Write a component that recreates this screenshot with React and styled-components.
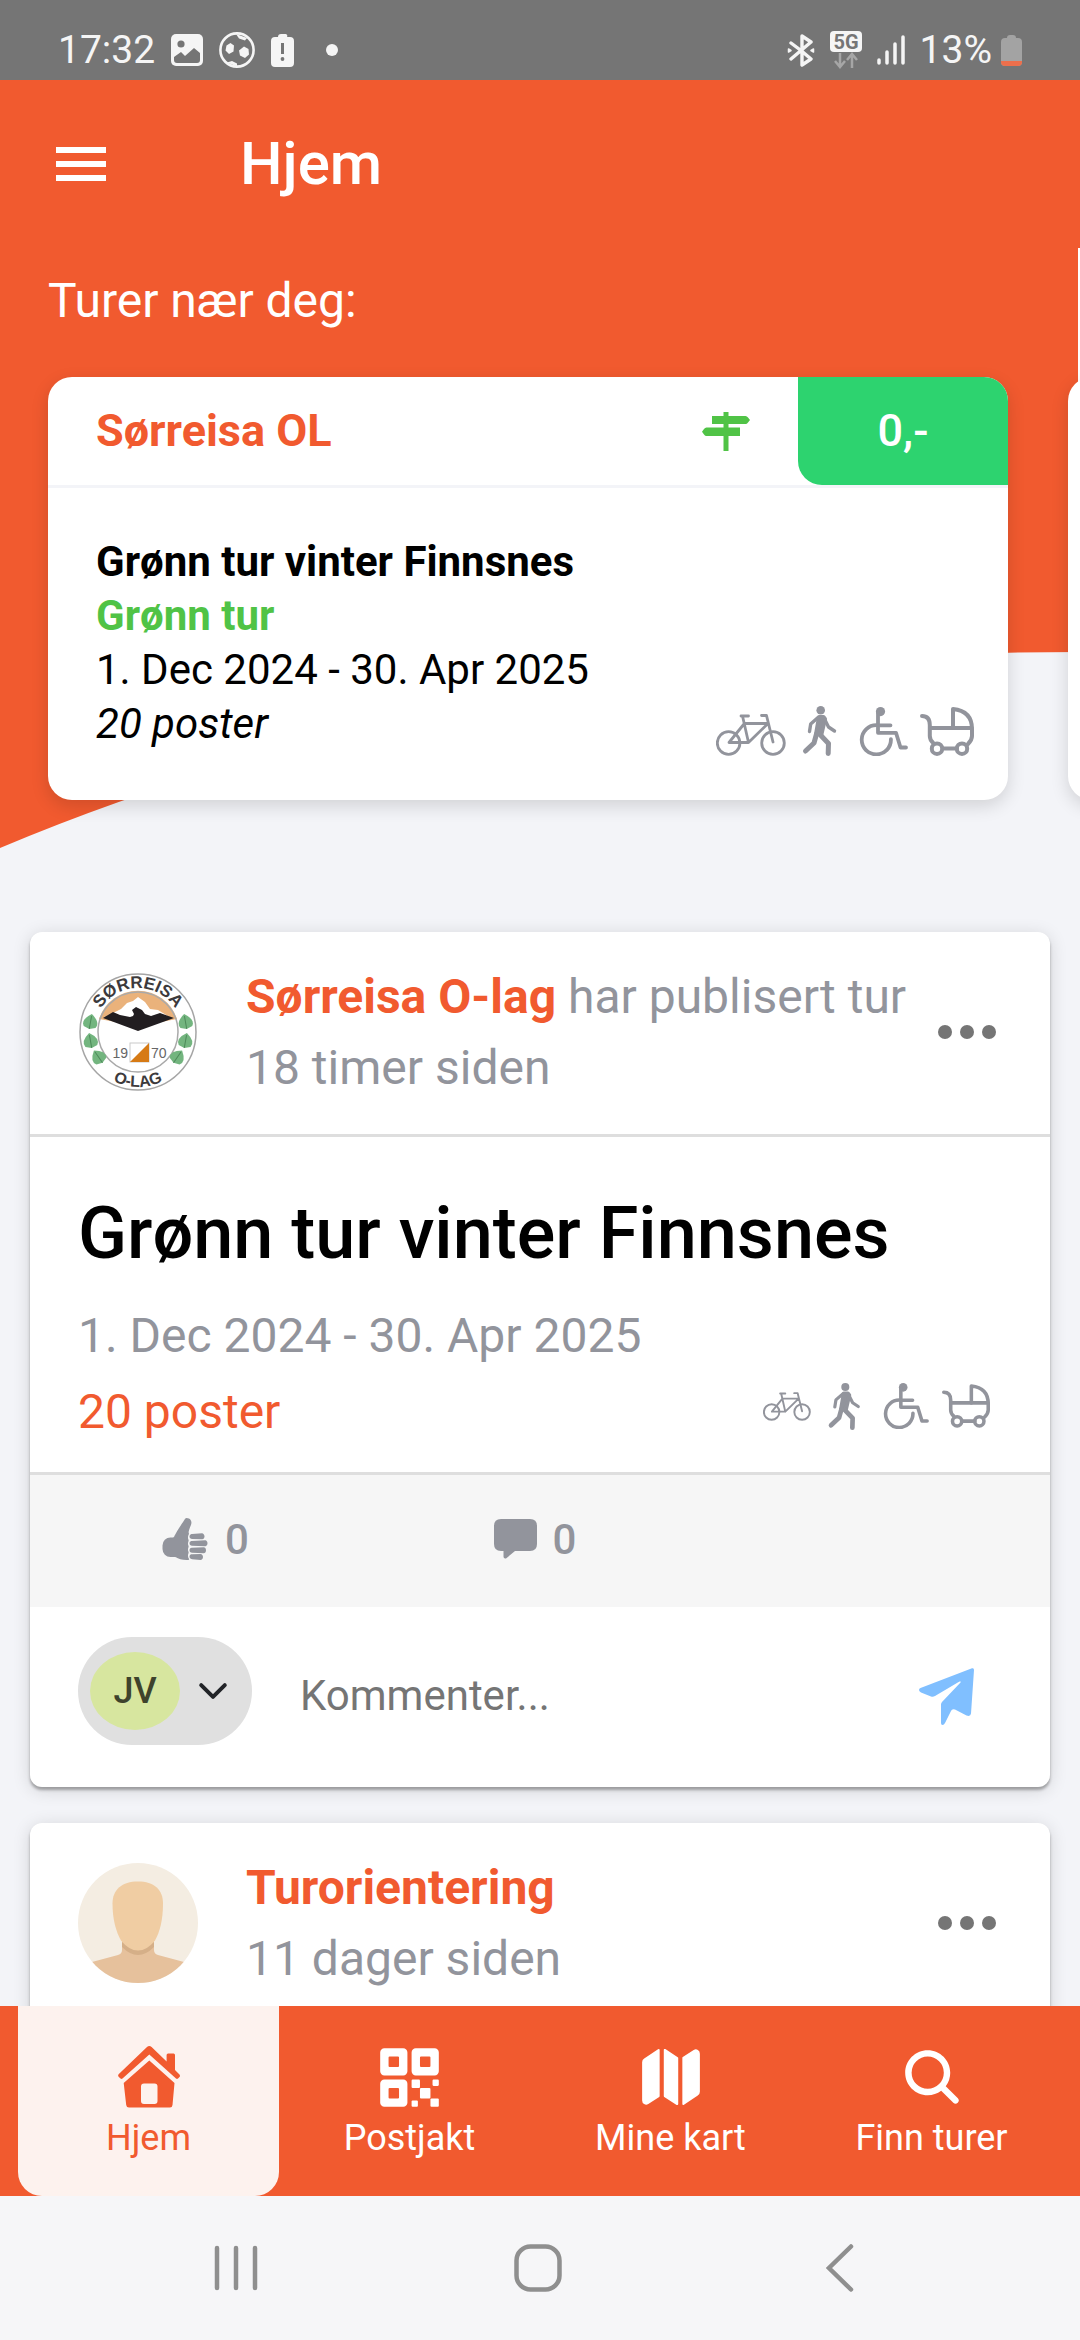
import styled, { createGlobalStyle } from "styled-components";
import {
	IoChevronDown,
	IoMap,
	IoQrCode,
	IoSearch,
	IoThumbsUp,
} from "react-icons/io5";

const GlobalStyle = createGlobalStyle`
	* {
		box-sizing: border-box;
	}

	body {
		margin: 0;
		background: #f3f4f8;
		font-family: Roboto, "Noto Sans", sans-serif;
		color: #000;
	}

	h1, h2, h3, p {
		margin: 0;
	}

	button, input {
		font: inherit;
		color: inherit;
		border: 0;
		padding: 0;
		background: none;
	}

	a {
		text-decoration: none;
		color: inherit;
	}

	svg {
		display: block;
		flex: none;
	}
`;

const Screen = styled.div`
	display: flex;
	flex-direction: column;
	height: 100vh;
	overflow: hidden;
`;

/* Status bar */

const StatusBar = styled.div`
	display: flex;
	justify-content: space-between;
	align-items: center;
	height: 80px;
	padding: 20px 58px 0;
	background: #757575;
	color: #f5f5f5;
	font-size: 39px;
	line-height: 60px;
`;

const StatusGroup = styled.div`
	display: flex;
	align-items: center;
	gap: ${(props) => props.$gap}px;
`;

const StatusDot = styled.span`
	width: 12px;
	height: 12px;
	margin-left: 16px;
	border-radius: 50%;
	background: #f5f5f5;
`;

/* Page */

const Page = styled.main`
	position: relative;
	flex: 1;
	min-height: 0;
	overflow: hidden;
`;

const HeroShape = styled.svg`
	position: absolute;
	top: 0;
	left: 0;
	width: 100%;
	height: 768px;
	z-index: -1;
`;

const Toolbar = styled.header`
	display: flex;
	align-items: center;
	gap: 134px;
	height: 168px;
	padding: 0 56px;
	color: #fff;
`;

const PageTitle = styled.h1`
	font-size: 60px;
	font-weight: 500;
	line-height: 72px;
`;

const SectionTitle = styled.h2`
	padding: 24px 48px 0;
	color: #fff;
	font-size: 48px;
	font-weight: 400;
	line-height: 57px;
`;

/* Nearby trips */

const Carousel = styled.div`
	display: flex;
	gap: 60px;
	padding: 48px;
	overflow: hidden;
`;

const TripCard = styled.article`
	flex: 0 0 calc(100% - 24px);
	min-height: 423px;
	border-radius: 24px;
	background: #fff;
	box-shadow: 0 6px 18px rgba(0, 0, 0, 0.14);
	overflow: hidden;
`;

const TripHead = styled.div`
	display: flex;
	align-items: stretch;
	height: 111px;
	border-bottom: 3px solid #f3f4f8;
`;

const TripClub = styled.h3`
	flex: 1;
	padding-left: 48px;
	color: #f15a2f;
	font-size: 45px;
	font-weight: 700;
	line-height: 108px;
`;

const TripType = styled.span`
	display: flex;
	align-items: center;
	padding-right: 48px;
`;

const Price = styled.span`
	width: 210px;
	border-bottom-left-radius: 24px;
	background: #2dd36f;
	color: #fff;
	font-size: 45px;
	font-weight: 500;
	line-height: 108px;
	text-align: center;
`;

const TripBody = styled.div`
	display: flex;
	justify-content: space-between;
	align-items: flex-end;
	padding: 47px 34px 44px 48px;
`;

const TripText = styled.div`
	padding-bottom: 5px;
	font-size: 42px;
	line-height: 54px;
`;

const TripName = styled.p`
	font-weight: 700;
	color: ${(props) => (props.$green ? "#50c346" : "#000")};
`;

const TripPosts = styled.p`
	font-style: italic;
`;

const ActivityList = styled.div`
	display: flex;
	align-items: ${(props) => (props.$small ? "center" : "flex-end")};
	gap: ${(props) => (props.$small ? 13 : 12)}px;
	color: #92949c;
`;

/* Feed */

const Feed = styled.section`
	display: flex;
	flex-direction: column;
	gap: 36px;
	padding: 84px 30px 0;
`;

const PostCard = styled.article`
	border-radius: 12px;
	background: #fff;
	box-shadow: 0 3px 3px rgba(0, 0, 0, 0.3), 0 3px 18px rgba(0, 0, 0, 0.14);
	overflow: hidden;
`;

const PostHead = styled.div`
	display: flex;
	align-items: center;
	padding: 29px 48px 31px;
	border-bottom: 3px solid #dedede;
`;

const PostMeta = styled.div`
	flex: 1;
	padding-left: 48px;
	color: #92949c;
	font-size: 48px;
	line-height: 71px;
	white-space: nowrap;
`;

const Author = styled.a`
	color: #f15a2f;
	font-weight: 700;
`;

const MoreButton = styled.button`
	display: flex;
	gap: 8px;
	padding-right: 6px;
`;

const MoreDot = styled.span`
	width: 14px;
	height: 14px;
	border-radius: 50%;
	background: #757575;
`;

const PostBody = styled.div`
	padding: 55px 48px 22px;
	border-bottom: 3px solid #dedede;
	color: #92949c;
	font-size: 48px;
	line-height: 76px;
`;

const PostTitle = styled.h2`
	margin-bottom: 22px;
	color: #000;
	font-size: 72px;
	font-weight: 500;
	line-height: 84px;
`;

const PostRow = styled.div`
	display: flex;
	justify-content: space-between;
	align-items: center;
	height: 76px;
`;

const PostIcons = styled.div`
	padding: 0 12px 12px 0;
`;

const PostLink = styled.a`
	color: #f15a2f;
`;

const Reactions = styled.div`
	display: grid;
	grid-template-columns: repeat(3, 1fr);
	height: 132px;
	padding: 0 20px 4px 10px;
	background: #f6f6f6;
	color: #92949c;
	font-size: 42px;
	font-weight: 500;
`;

const Reaction = styled.button`
	display: flex;
	justify-content: center;
	align-items: center;
	gap: 16px;
`;

const CommentForm = styled.form`
	display: flex;
	align-items: center;
	gap: 48px;
	height: 180px;
	padding: 0 76px 0 48px;
`;

const AccountButton = styled.button`
	display: flex;
	align-items: center;
	gap: 12px;
	width: 174px;
	height: 108px;
	margin-bottom: 12px;
	padding-left: 12px;
	border-radius: 54px;
	background: #e0e0e0;
	color: #222428;
`;

const Initials = styled.span`
	width: 90px;
	height: 78px;
	border-radius: 50%;
	background: #d7e69f;
	color: #3e432c;
	font-size: 36px;
	font-weight: 500;
	line-height: 78px;
	text-align: center;
`;

const CommentInput = styled.input`
	flex: 1;
	min-width: 0;
	height: 90px;
	margin-bottom: 4px;
	font-size: 42px;
	outline: none;

	&::placeholder {
		color: #757575;
		opacity: 1;
	}
`;

/* Bottom bars */

const TabBar = styled.nav`
	display: grid;
	grid-template-columns: repeat(4, 1fr);
	flex: none;
	height: 190px;
	padding: 0 18px;
	background: #f15a2f;
`;

const Tab = styled.a`
	display: flex;
	flex-direction: column;
	align-items: center;
	gap: 2px;
	padding-top: 36px;
	border-radius: 0 0 24px 24px;
	background: ${(props) => (props.$active ? "#fdf2ee" : "transparent")};
	color: ${(props) => (props.$active ? "#f15a2f" : "#fff")};
	font-size: 36px;
	line-height: 48px;
`;

const TabIcon = styled.span`
	display: flex;
	justify-content: center;
	align-items: center;
	height: 70px;
`;

const SystemBar = styled.div`
	display: flex;
	justify-content: center;
	align-items: center;
	gap: 242px;
	flex: none;
	height: 144px;
	padding-right: 5px;
	background: #f6f6f8;
`;

const SystemButton = styled.button`
	display: flex;
	justify-content: center;
	width: 60px;
`;

/* Icons */

function ImageIcon() {
	return (
		<svg width="32" height="32" viewBox="0 0 32 32">
			<rect width="32" height="32" rx="5" fill="#f5f5f5" />
			<circle cx="10" cy="10" r="3.6" fill="#757575" />
			<path d="M3 23l7-5 4 4 9-8 6 5v7a3 3 0 0 1-3 3H6a3 3 0 0 1-3-3z" fill="#757575" />
		</svg>
	);
}

function BallIcon() {
	return (
		<svg width="36" height="36" viewBox="0 0 36 36">
			<circle cx="18" cy="18" r="16.6" fill="none" stroke="#f5f5f5" strokeWidth="2.6" />
			<g fill="#f5f5f5">
				<path d="M11.500 11l3.500 2.500-.5 6-4.500 2.500-3.500-3.500 1-5z" />
				<path d="M25 14.500l4.500 2.500.5 5.500-4 3.500-5-2.500-1-5z" />
				<path d="M17 2l11 4-2 2.500-6-2z" />
				<path d="M8 30.500l5-1.500 5 2.500v3z" />
			</g>
		</svg>
	);
}

function BatteryAlertIcon() {
	return (
		<svg width="23" height="33" viewBox="0 0 23 33">
			<path d="M7 3a3 3 0 0 1 3-3h4a2 2 0 0 1 2 3h3a4 4 0 0 1 4 4v22a4 4 0 0 1-4 4H4a4 4 0 0 1-4-4V7a4 4 0 0 1 4-4z" fill="#f5f5f5" />
			<path d="M11.500 9v11" stroke="#757575" strokeWidth="3" />
			<circle cx="11.500" cy="25" r="1.900" fill="#757575" />
		</svg>
	);
}

function BluetoothIcon() {
	return (
		<svg width="28" height="33" viewBox="0 0 28 33" fill="none" stroke="#f5f5f5" strokeWidth="3.400" strokeLinejoin="round" strokeLinecap="round">
			<path d="M4 9l10 7.500L24 25l-9 6V2l9 6-10 8.500L4 25" />
			<path d="M26.500 15l-2.500 1.500 2.500 1.500zM1.500 15L4 16.500 1.500 18z" strokeWidth="1.500" fill="#f5f5f5" />
		</svg>
	);
}

function NetworkIcon() {
	return (
		<svg width="32" height="38" viewBox="0 0 32 38">
			<rect width="32" height="21" rx="4" fill="#f5f5f5" />
			<text x="16" y="18" textAnchor="middle" fontSize="20" fontWeight="700" fill="#757575">
				5G
			</text>
			<path d="M10 22v13M5 30l5 6 5-6M22 37V24M17 29l5-6 5 6" fill="none" stroke="#a6a6a6" strokeWidth="2.500" />
		</svg>
	);
}

function SignalIcon() {
	return (
		<svg width="28" height="30" viewBox="0 0 28 30" stroke="#f5f5f5" strokeWidth="3.500" strokeLinecap="round">
			<path d="M2 25v3M10 17v11M18 9v19M26 2v26" />
		</svg>
	);
}

function BatteryIcon() {
	return (
		<svg width="21" height="31" viewBox="0 0 21 31">
			<path d="M6 3a3 3 0 0 1 3-3h3a3 3 0 0 1 3 3h2a4 4 0 0 1 4 4v20a4 4 0 0 1-4 4H4a4 4 0 0 1-4-4V7a4 4 0 0 1 4-4z" fill="#a3a3a3" />
			<path d="M0 26h21v1a4 4 0 0 1-4 4H4a4 4 0 0 1-4-4z" fill="#ec6f4c" />
		</svg>
	);
}

function MenuIcon() {
	return (
		<svg width="50" height="34" viewBox="0 0 50 34" fill="#fff">
			<path d="M0 0h50v6H0zM0 14h50v6H0zM0 28h50v6H0z" />
		</svg>
	);
}

function SignpostIcon() {
	return (
		<svg width="48" height="39" viewBox="0 0 48 39" fill="#50c346">
			<path d="M21.500 0h5v39h-5z" />
			<path d="M10 4h33.500q1.500 0 2.500 1.500L48 8l-2 2.500q-1 1.500-2.500 1.500H10z" />
			<path d="M38 15.500H4.500Q3 15.500 2 17l-2 2.700 2 2.800q1 1.500 2.500 1.500H38z" />
		</svg>
	);
}

function BikeIcon({ width, height }) {
	return (
		<svg width={width} height={height} viewBox="0 0 70 42" fill="none" stroke="currentColor" strokeWidth="2.800" strokeLinecap="round" strokeLinejoin="round">
			<circle cx="12.600" cy="29" r="11.300" />
			<circle cx="57" cy="29" r="11.300" />
			<path d="M25 2h7.500M26.500 2l6 26.500H13L28 10M28.500 9.500H52L32.500 28.500M45.500 1.500h5L57 28" />
		</svg>
	);
}

function WalkIcon({ width, height }) {
	return (
		<svg width={width} height={height} viewBox="-5 0 49 50" fill="none" stroke="currentColor" strokeLinecap="round" strokeLinejoin="round">
			<circle cx="17.700" cy="4.300" r="4.300" fill="currentColor" stroke="none" />
			<path d="M16 11h4.500l1.500 2-3.500 15H13z" fill="currentColor" strokeWidth="4" />
			<path d="M15 11.500L7.700 18 6.500 25.500M22 14l3.500 7 6 4" strokeWidth="3.400" />
			<path d="M16.500 28l9 9.500-.3 10" strokeWidth="5" />
			<path d="M13.500 28L11 37l-8.500 8" strokeWidth="5" />
		</svg>
	);
}

function WheelchairIcon({ width, height }) {
	return (
		<svg width={width} height={height} viewBox="0 0 49 49" fill="none" stroke="currentColor" strokeWidth="3.800" strokeLinecap="round" strokeLinejoin="round">
			<circle cx="21.500" cy="4.600" r="4.600" fill="currentColor" stroke="none" />
			<path d="M19 5v20.800h18l4.500 14.700H47M19 18.300h12.500" />
			<path d="M18 18.200a14.600 14.600 0 1 0 13.900 14" />
		</svg>
	);
}

function StrollerIcon({ width, height }) {
	return (
		<svg width={width} height={height} viewBox="0 0 54 49" fill="none" stroke="currentColor" strokeWidth="4" strokeLinecap="round" strokeLinejoin="round">
			<path d="M2 9q7.800 0 7.800 9v11q0 4 3.500 7M9.800 21h42" />
			<path d="M33 21V2q19 2 19 20v7q0 4-4 8M23 41.500h14" />
			<circle cx="17" cy="41.700" r="5.200" />
			<circle cx="42" cy="41.700" r="5.200" />
		</svg>
	);
}

function CommentIcon() {
	return (
		<svg width="43" height="40" viewBox="0 0 43 40" fill="currentColor">
			<path d="M7 0h29q7 0 7 7v18q0 7-7 7H21l-9 7.500q-2.500.5-2.500-2V32H7q-7 0-7-7V7q0-7 7-7z" />
		</svg>
	);
}

function SendIcon() {
	return (
		<svg width="55" height="58" viewBox="0 0 55 58" fill="#80bfff">
			<path d="M53 .3L1.500 20Q0 20.700 0 22t2 2.500l10 4q2 .8 4-.5L40.500 13.500q2-.5 1 1L23 34q-1 1-1 2.500V55q0 2 1.500 2t2.500-2l6-12q1-2.500 4-1.500l11.500 6q4 1.500 4.500-2L55 2q0-2.300-2-1.700z" />
		</svg>
	);
}

function HomeIcon() {
	return (
		<svg width="62" height="62" viewBox="0 0 62 62" fill="currentColor">
			<path d="M29 1q2.300-2 4.600 0l15 14.500V9q0-1.500 1.500-1.500h5.500Q57 7.500 57 9v15l4.500 4.500q1 1.500 0 2.500l-1.500 1.500q-1 .8-2 0L31.300 8.500 4.500 32.500q-1 .8-2 0L.6 30.700q-1-1.200 0-2.500z" />
			<path
				fillRule="evenodd"
				d="M31.300 14.500L56.500 37l-2 22q-.3 2.500-2.500 2.500H11Q8.500 61.500 8.200 59L5.700 37zM26 37.500q-3 0-3 3V55q0 3 3 3h10.500q3 0 3-3V40.500q0-3-3-3z"
			/>
		</svg>
	);
}

function ClubLogo() {
	return (
		<svg width="120" height="120" viewBox="0 0 120 120" role="img" aria-label="Sørreisa O-lag">
			<defs>
				<path id="logoTop" d="M16 60a44 44 0 0 1 88 0" />
				<path id="logoBottom" d="M5 60a55 55 0 0 0 110 0" />
			</defs>
			<circle cx="60" cy="60" r="58" fill="#fff" stroke="#a5a5a5" strokeWidth="1.500" />
			<path d="M21 47a41 41 0 0 1 78 0L61 54z" fill="#eab27b" />
			<circle cx="60" cy="60" r="40" fill="none" stroke="#a9a9a9" strokeWidth="1.500" />
			<path d="M29 44l14-7 6-6 6-2 5-4 7 5 5 7 8 1 13 8-32 9z" fill="#fff" />
			<path d="M25 46l10-6 7 3 10 2 3-1 1-2-2-4 4-3 6 3 3 4 6 2 9-3 14 5-36 13z" fill="#211d20" />
			{[
				[12.5, 50, 10],
				[12.5, 69, -10],
				[20.5, 85, -35],
				[107.5, 50, -10],
				[107.5, 69, 10],
				[99.5, 85, 35],
			].map(([x, y, angle]) => (
				<g key={`${x}-${y}`} transform={`translate(${x} ${y}) rotate(${angle})`}>
					<path d="M0-8q10 7 6 13l-6 2-6-2q-4-6 6-13z" fill="#73b57f" />
					<path d="M0-6V7" stroke="#4d8a59" strokeWidth="1" />
				</g>
			))}
			<rect x="52" y="71" width="19" height="19" fill="#fff" stroke="#c9c9c9" strokeWidth="1" />
			<path d="M71 71v19H52z" fill="#d67a15" />
			<g fontFamily="Liberation Sans, sans-serif" fill="#3c3a3c">
				<text x="50" y="86" fontSize="14" textAnchor="end" fill="#666">19</text>
				<text x="73" y="86" fontSize="14" fill="#666">70</text>
				<text fontSize="17" fontWeight="700" textAnchor="middle">
					<textPath href="#logoTop" startOffset="50%">SØRREISA</textPath>
				</text>
				<text fontSize="16" fontWeight="700" textAnchor="middle">
					<textPath href="#logoBottom" startOffset="50%">O-LAG</textPath>
				</text>
			</g>
		</svg>
	);
}

function PersonAvatar() {
	return (
		<svg width="120" height="120" viewBox="0 0 120 120" role="img" aria-label="Turorientering">
			<clipPath id="avatarClip">
				<circle cx="60" cy="60" r="60" />
			</clipPath>
			<g clipPath="url(#avatarClip)">
				<rect width="120" height="120" fill="#f4ede2" />
				<path d="M44 74h32v13q0 4 4 5l26 7 14 21H0l14-21 26-7q4-1 4-5z" fill="#e6c19c" />
				<path d="M44 79q16 12 32 0v5q-16 16-32 0z" fill="#d5af88" />
				<path d="M60 18.500c16 0 25 8 25 22 0 16-3 28-8 37q-8 10-17 10t-17-10c-5-9-8.500-21-8.500-37 0-14 9.500-22 25.500-22z" fill="#f0cda3" />
			</g>
		</svg>
	);
}

function Activities({ small }) {
	return (
		<ActivityList $small={small}>
			<BikeIcon width={small ? 48 : 70} height={small ? 29 : 42} />
			<WalkIcon width={small ? 46 : 49} height={small ? 47 : 50} />
			<WheelchairIcon width={small ? 46 : 49} height={small ? 46 : 49} />
			<StrollerIcon width={small ? 48 : 54} height={small ? 44 : 49} />
		</ActivityList>
	);
}

function PostHeader({ avatar, author, action, time }) {
	return (
		<PostHead>
			{avatar}
			<PostMeta>
				<p>
					<Author href="#">{author}</Author> {action}
				</p>
				<p>{time}</p>
			</PostMeta>
			<MoreButton type="button" aria-label="Mer">
				<MoreDot />
				<MoreDot />
				<MoreDot />
			</MoreButton>
		</PostHead>
	);
}

const tabs = [
	{ label: "Hjem", icon: <HomeIcon />, active: true },
	{ label: "Postjakt", icon: <IoQrCode size={67} /> },
	{ label: "Mine kart", icon: <IoMap size={66} /> },
	{ label: "Finn turer", icon: <IoSearch size={66} /> },
];

function App() {
	return (
		<Screen>
			<GlobalStyle />

			<StatusBar>
				<StatusGroup $gap={16}>
					<span>17:32</span>
					<ImageIcon />
					<BallIcon />
					<BatteryAlertIcon />
					<StatusDot />
				</StatusGroup>
				<StatusGroup $gap={15}>
					<BluetoothIcon />
					<NetworkIcon />
					<SignalIcon />
					<StatusGroup $gap={9}>
						<span>13%</span>
						<BatteryIcon />
					</StatusGroup>
				</StatusGroup>
			</StatusBar>

			<Page>
				<HeroShape viewBox="0 0 1080 768" preserveAspectRatio="none" aria-hidden="true">
					<path d="M0 0h1080v572Q465 572 0 768z" fill="#f15a2f" />
					<path d="M1078 168h2v403h-2z" fill="#fff" />
				</HeroShape>

				<Toolbar>
					<button type="button" aria-label="Meny">
						<MenuIcon />
					</button>
					<PageTitle>Hjem</PageTitle>
				</Toolbar>

				<SectionTitle>Turer nær deg:</SectionTitle>
				<Carousel>
					<TripCard>
						<TripHead>
							<TripClub>Sørreisa OL</TripClub>
							<TripType>
								<SignpostIcon />
							</TripType>
							<Price>0,-</Price>
						</TripHead>
						<TripBody>
							<TripText>
								<TripName>Grønn tur vinter Finnsnes</TripName>
								<TripName $green>Grønn tur</TripName>
								<p>1. Dec 2024 - 30. Apr 2025</p>
								<TripPosts>20 poster</TripPosts>
							</TripText>
							<Activities />
						</TripBody>
					</TripCard>
					<TripCard />
				</Carousel>

				<Feed>
					<PostCard>
						<PostHeader
							avatar={<ClubLogo />}
							author="Sørreisa O-lag"
							action="har publisert tur"
							time="18 timer siden"
						/>
						<PostBody>
							<PostTitle>Grønn tur vinter Finnsnes</PostTitle>
							<p>1. Dec 2024 - 30. Apr 2025</p>
							<PostRow>
								<PostLink href="#">20 poster</PostLink>
								<PostIcons>
									<Activities small />
								</PostIcons>
							</PostRow>
						</PostBody>
						<Reactions>
							<Reaction type="button" aria-label="Liker">
								<IoThumbsUp size={48} />0
							</Reaction>
							<Reaction type="button" aria-label="Kommentarer">
								<CommentIcon />0
							</Reaction>
						</Reactions>
						<CommentForm onSubmit={(e) => e.preventDefault()}>
							<AccountButton type="button" aria-label="Velg konto">
								<Initials>JV</Initials>
								<IoChevronDown size={42} />
							</AccountButton>
							<CommentInput
								type="text"
								aria-label="Kommenter"
								placeholder="Kommenter..."
							/>
							<button type="submit" aria-label="Send">
								<SendIcon />
							</button>
						</CommentForm>
					</PostCard>

					<PostCard>
						<PostHeader
							avatar={<PersonAvatar />}
							author="Turorientering"
							time="11 dager siden"
						/>
					</PostCard>
				</Feed>
			</Page>

			<TabBar>
				{tabs.map((tab) => (
					<Tab key={tab.label} href="#" $active={tab.active}>
						<TabIcon>{tab.icon}</TabIcon>
						{tab.label}
					</Tab>
				))}
			</TabBar>

			<SystemBar>
				<SystemButton type="button" aria-label="Nylige">
					<svg width="44" height="46" viewBox="0 0 44 46" stroke="#8f8f8f" strokeWidth="4.500" strokeLinecap="round">
						<path d="M3 3v40M22 3v40M41 3v40" />
					</svg>
				</SystemButton>
				<SystemButton type="button" aria-label="Startskjerm">
					<svg width="48" height="48" viewBox="0 0 48 48" fill="none" stroke="#8f8f8f" strokeWidth="4.500">
						<rect x="2.500" y="2.500" width="43" height="43" rx="14" />
					</svg>
				</SystemButton>
				<SystemButton type="button" aria-label="Tilbake">
					<svg width="28" height="48" viewBox="0 0 28 48" fill="none" stroke="#8f8f8f" strokeWidth="4.500" strokeLinecap="round">
						<path d="M25 2.500L3 24l22 21.500" />
					</svg>
				</SystemButton>
			</SystemBar>
		</Screen>
	);
}

export default App;
